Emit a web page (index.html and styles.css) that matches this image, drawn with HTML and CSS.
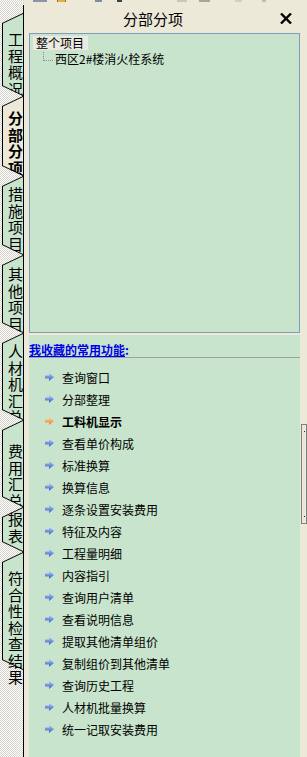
FILE: index.html
```html
<!DOCTYPE html>
<html>
  <head>
    <title>分部分项</title>
    <meta charset="UTF-8">
    <link rel="stylesheet" href="styles.css">
  </head>
<body>

  <!--cut off toolbar at the top-->
  <div class="toolbar">
    <span class="tb-dither"></span>
    <span class="tb tb-a"></span>
    <span class="tb tb-b"></span>
    <span class="tb tb-c"></span>
    <span class="tb tb-d"></span>
    <span class="tb tb-e"></span>
    <span class="tb tb-f"></span>
    <span class="tb tb-g"></span>
    <span class="tb tb-h"></span>
  </div>

  <div class="main">

    <!--vertical tabs-->
    <aside class="side">
      <div class="tabs">
        <div class="tab t1">
          <div class="tab-shape"><div class="tab-fill"></div></div>
          <div class="tab-label">工程概况</div>
        </div>
        <div class="tab t2 active">
          <div class="tab-shape"><div class="tab-fill"></div></div>
          <div class="tab-label">分部分项</div>
        </div>
        <div class="tab t3">
          <div class="tab-shape"><div class="tab-fill"></div></div>
          <div class="tab-label">措施项目</div>
        </div>
        <div class="tab t4">
          <div class="tab-shape"><div class="tab-fill"></div></div>
          <div class="tab-label">其他项目</div>
        </div>
        <div class="tab t5">
          <div class="tab-shape"><div class="tab-fill"></div></div>
          <div class="tab-label">人材机汇总</div>
        </div>
        <div class="tab t6">
          <div class="tab-shape"><div class="tab-fill"></div></div>
          <div class="tab-label">费用汇总</div>
        </div>
        <div class="tab t7">
          <div class="tab-shape"><div class="tab-fill"></div></div>
          <div class="tab-label">报表</div>
        </div>
        <div class="tab t8">
          <div class="tab-shape"><div class="tab-fill"></div></div>
          <div class="tab-label open">符合性检查结果</div>
        </div>
      </div>
    </aside>

    <!--panel-->
    <section class="panel">
      <div class="titlebar">
        <div class="title">分部分项</div>
        <div class="close">
          <svg width="12" height="11" viewBox="0 0 12 11">
            <path d="M1 0.5 L11 10.5 M11 0.5 L1 10.5" stroke="#000" stroke-width="2.4" fill="none"/>
          </svg>
        </div>
      </div>

      <!--project tree-->
      <div class="tree">
        <div class="node-root">整个项目</div>
        <div class="node-child">
          <span class="branch"></span>
          <span>西区2#楼消火栓系统</span>
        </div>
      </div>

      <div class="lower">
        <!--favourites-->
        <div class="fav">
          <div class="fav-head"><span>我收藏的常用功能</span>:</div>
          <ul class="fav-list">
            <li><i class="arrow"></i>查询窗口</li>
            <li><i class="arrow"></i>分部整理</li>
            <li class="current"><i class="arrow orange"></i>工料机显示</li>
            <li><i class="arrow"></i>查看单价构成</li>
            <li><i class="arrow"></i>标准换算</li>
            <li><i class="arrow"></i>换算信息</li>
            <li><i class="arrow"></i>逐条设置安装费用</li>
            <li><i class="arrow"></i>特征及内容</li>
            <li><i class="arrow"></i>工程量明细</li>
            <li><i class="arrow"></i>内容指引</li>
            <li><i class="arrow"></i>查询用户清单</li>
            <li><i class="arrow"></i>查看说明信息</li>
            <li><i class="arrow"></i>提取其他清单组价</li>
            <li><i class="arrow"></i>复制组价到其他清单</li>
            <li><i class="arrow"></i>查询历史工程</li>
            <li><i class="arrow"></i>人材机批量换算</li>
            <li><i class="arrow"></i>统一记取安装费用</li>
          </ul>
        </div>

        <!--little scroll thumb-->
        <div class="scroll">
          <span class="dot"></span>
          <span class="dot"></span>
        </div>
      </div>
    </section>
  </div>

</body>
</html>
```

FILE: styles.css
```css
html, body {
  margin: 0;
  padding: 0;
  width: 307px;
  height: 757px;
  overflow: hidden;
  font-family: "Noto Sans CJK SC", "Noto Sans", sans-serif;
  font-size: 12px;
  color: #000;
  background-color: #ece9d8;
}

body {
  display: flex;
  flex-direction: column;
}

/* dither pattern used behind the tabs */
.side,
.tb-dither {
  background-color: #fff;
  background-image: repeating-conic-gradient(#d6d3ca 0 25%, #fff 0 50%);
  background-size: 2px 2px;
}

/**Toolbar rest*/
.toolbar {
  height: 3px;
  display: flex;
  flex: none;
}

.tb-dither {
  width: 24px;
}

.tb {
  height: 2px;
}

.tb-a { width: 14px; margin-left: 9px; background-color: #8d96a8; }
.tb-b { width: 7px; margin-left: 10px; background-color: #e8b040; border: 0 solid #9a6a10; border-width: 0 1px; }
.tb-c { width: 7px; margin-left: 29px; background-color: #7d8aa4; }
.tb-d { width: 5px; margin-left: 15px; background-color: #404040; }
.tb-e { width: 10px; margin-left: 55px; background-color: #c9c6bc; }
.tb-f { width: 11px; margin-left: 12px; background-color: #a8a59c; }
.tb-g { width: 7px; margin-left: 25px; background-color: #d2cfc5; }
.tb-h { width: 4px; margin-left: 20px; background-color: #bdbab0; }

.main {
  flex: 1;
  display: flex;
  min-height: 0;
}

/**Vertical tabs*/
.side {
  width: 24px;
  flex: none;
}

.tabs {
  margin-top: 2px;
  height: calc(100% - 2px);
  box-sizing: border-box;
  padding: 8px 0 0 2px;
  border-right: 1px solid #000;
}

.tab {
  width: 21px;
  display: grid;
  grid-template-rows: minmax(0, 1fr);
  grid-template-columns: 21px;
}

.tab-shape,
.tab-label {
  grid-area: 1 / 1;
}

.tab-shape {
  padding: 1px 0 1px 1px;
  background-color: #000;
  clip-path: polygon(100% 0, 100% 100%, 0 calc(100% - 10px), 0 10px);
}

.tab-fill {
  height: 100%;
  background-color: #c8e4cc;
  clip-path: polygon(100% 0, 100% 100%, 0 calc(100% - 9.5px), 0 9.5px);
}

.active .tab-fill {
  background-color: #ece9d8;
}

.tab-label {
  writing-mode: vertical-rl;
  white-space: nowrap;
  font-size: 15px;
  line-height: 15px;
  letter-spacing: 1.5px;
  padding-left: 6px;
  overflow: hidden;
  clip-path: polygon(100% 0, 100% 100%, 0 calc(100% - 10px), 0 10px);
}

/* last tab lets its text run out below the shape */
.tab-label.open {
  overflow: visible;
  clip-path: inset(0 0 -60px 0);
}

.active .tab-label {
  font-weight: bold;
}

.t1 { height: 83px; }
.t2 { height: 80px; }
.t3 { height: 79px; }
.t4 { height: 78px; }
.t5 { height: 87px; }
.t6 { height: 87px; }
.t7 { height: 45px; }
.t8 { height: 118px; }

.t1 .tab-label { padding-top: 19px; }
.t2 .tab-label { padding-top: 15px; }
.t3 .tab-label { padding-top: 11px; }
.t4 .tab-label { padding-top: 12px; }
.t5 .tab-label { padding-top: 11px; }
.t6 .tab-label { padding-top: 24px; }
.t7 .tab-label { padding-top: 5px; }
.t8 .tab-label { padding-top: 19px; }

/**Panel*/
.panel {
  flex: 1;
  display: flex;
  flex-direction: column;
  background-color: #ece9d8;
}

.titlebar {
  height: 30px;
  display: flex;
  align-items: center;
  flex: none;
}

.title {
  flex: 1;
  text-align: center;
  font-size: 15px;
  padding-left: 4px;
}

.close {
  width: 29px;
  display: flex;
  align-items: center;
}

.close svg {
  margin-left: 2px;
}

/**Tree*/
.tree {
  height: 300px;
  margin: 0 7px 0 5px;
  box-sizing: border-box;
  border: 1px solid #7f9db9;
  background-color: #c8e4cc;
  flex: none;
}

.node-root {
  display: inline-block;
  margin-left: 3px;
  padding: 0 4px 0 3px;
  height: 14px;
  line-height: 14px;
  background-color: #ebeae2;
}

.node-child {
  display: flex;
  height: 14px;
  line-height: 14px;
  margin-top: 1px;
}

.branch {
  width: 9px;
  height: 8px;
  margin: 0 2px 0 13px;
  border-left: 1px dotted #8c8c8c;
  border-bottom: 1px dotted #8c8c8c;
}

/**Favourites*/
.lower {
  flex: 1;
  display: flex;
  margin: 2px 0 0 5px;
  min-height: 0;
}

.fav {
  width: 271px;
  background-color: #c8e4cc;
}

.fav-head {
  padding-top: 8px;
  line-height: 14px;
  font-weight: bold;
  color: #0000e8;
  border-bottom: 1px solid #98a69a;
}

.fav-head span {
  text-decoration: underline;
}

.fav-list {
  list-style: none;
  margin: 8px 0 0 0;
  padding: 0 0 0 16px;
}

.fav-list li {
  height: 22px;
  display: flex;
  align-items: center;
}

.fav-list li.current {
  font-weight: bold;
}

.arrow {
  width: 9px;
  height: 8px;
  margin-right: 8px;
  background: linear-gradient(#b4cbf4, #2f5fc4);
  clip-path: polygon(0 30%, 45% 30%, 45% 0, 100% 50%, 45% 100%, 45% 70%, 0 70%);
}

.arrow.orange {
  background: linear-gradient(#fcd49c, #e8801c);
}

.scroll {
  width: 6px;
  height: 100px;
  margin: 89px 0 0 1px;
  box-sizing: border-box;
  border: 1px solid #808080;
  background-color: #ece9d8;
  display: flex;
  flex-direction: column;
  justify-content: space-between;
  align-items: center;
  padding: 6px 0;
}

.dot {
  width: 1px;
  height: 1px;
  background-color: #222;
}
```
